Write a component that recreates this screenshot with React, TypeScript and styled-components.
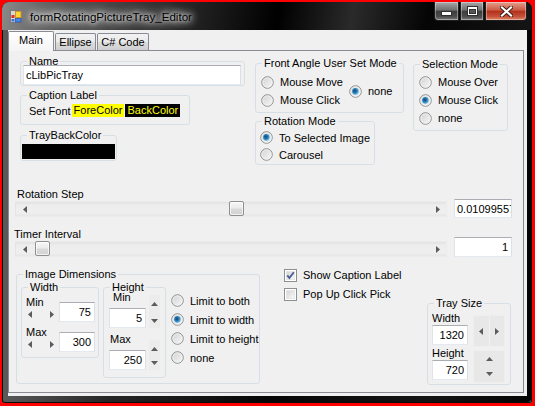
import React from 'react'
import styled, { createGlobalStyle } from 'styled-components'

const GlobalStyle = createGlobalStyle`
  html, body { margin: 0; padding: 0; background: #ff0000; overflow: hidden; }
  body { font-family: "Liberation Sans", Arial, sans-serif; font-size: 11px; color: #000; }
  * { box-sizing: border-box; }
`

// ---------- window chrome ----------
const Window = styled.div`
  width: 530px;
  height: 401px;
  margin: 2px 0 0 2px;
  display: flex;
  flex-direction: column;
  border-radius: 7px 7px 3px 3px;
  overflow: hidden;
  background: linear-gradient(90deg, #5a5a5a 0%, #262626 20%, #060606 50%, #141414 80%, #050505 100%);
  box-shadow: inset 0 0 0 1px #0a0a0a, inset -1px -1px 0 0 #4fb3c4;
`

const TitleBar = styled.div`
  height: 28px;
  flex: none;
  display: flex;
  align-items: center;
  padding-left: 8px;
  background: linear-gradient(100deg, #8a8a8a 0%, #5c5c5c 10%, #2c2c2c 32%, #000 52%, #2a2a2a 66%, #050505 80%, #151515 100%);
`

const AppIcon = () => (
  <svg width="12" height="13" viewBox="0 0 12 13">
    <rect x="0.5" y="0.5" width="11" height="12" fill="#d9d9d9" stroke="#7a7a7a" />
    <rect x="1.5" y="5" width="3" height="3" fill="#e03020" />
    <rect x="1.5" y="9" width="3" height="2.5" fill="#3a6fd0" />
    <rect x="5.5" y="1.5" width="5.5" height="6" fill="#ffd530" stroke="#c88a10" strokeWidth="0.8" />
    <rect x="5.5" y="8.5" width="5.5" height="3.5" fill="#4a86e8" stroke="#2a56b0" strokeWidth="0.8" />
  </svg>
)

const Caption = styled.span`
  margin-left: 8px;
  font-size: 11.6px;
  color: #000;
  white-space: nowrap;
  text-shadow: 0 0 4px #fff, 0 0 8px #fff, 0 0 12px rgba(255, 255, 255, 0.85), 0 0 18px rgba(255, 255, 255, 0.6);
`

const CaptionButtons = styled.div`
  display: flex;
  align-self: flex-start;
  margin-left: auto;
  margin-right: 5px;
`

const CapButton = styled.div<{ $kind: 'min' | 'max' | 'close' }>`
  width: ${p => (p.$kind === 'close' ? 42 : p.$kind === 'min' ? 25 : 24)}px;
  height: 19px;
  display: flex;
  align-items: center;
  justify-content: center;
  border: 1px solid #1e1e1e;
  border-top: none;
  margin-left: ${p => (p.$kind === 'min' ? 0 : 1)}px;
  border-radius: ${p => (p.$kind === 'min' ? '0 0 0 4px' : p.$kind === 'close' ? '0 0 4px 0' : '0')};
  box-shadow: inset 0 0 0 1px rgba(255, 255, 255, 0.35);
  background: ${p =>
    p.$kind === 'close'
      ? 'linear-gradient(#e3a08f, #cc5a44 45%, #b2321c 52%, #c4503a 80%, #e08a6a)'
      : 'linear-gradient(#a8a8a8, #6f6f6f 45%, #3e3e3e 52%, #4c4c4c 80%, #7a7a7a)'};
`

const MinGlyph = () => (
  <svg width="11" height="10" viewBox="0 0 11 10">
    <rect x="0.5" y="5.5" width="10" height="4" fill="#fff" stroke="#303030" />
  </svg>
)

const MaxGlyph = () => (
  <svg width="11" height="10" viewBox="0 0 11 10">
    <rect x="0.5" y="0.5" width="10" height="9" fill="#fff" stroke="#303030" />
    <rect x="2.5" y="3.5" width="6" height="4" fill="#555" stroke="#303030" />
  </svg>
)

const CloseGlyph = () => (
  <svg width="13" height="11" viewBox="0 0 13 11">
    <path d="M2 1.5 L11 9.5 M11 1.5 L2 9.5" stroke="#3a1a14" strokeWidth="4" strokeLinecap="square" />
    <path d="M2 1.5 L11 9.5 M11 1.5 L2 9.5" stroke="#fff" strokeWidth="2.2" strokeLinecap="square" />
  </svg>
)

const Client = styled.div`
  flex: 1;
  margin: 0 5px 7px 6px;
  padding: 1px 3px 3px 0;
  background: #f0f0f0;
  display: flex;
  flex-direction: column;
`

// ---------- tabs ----------
const TabStrip = styled.div`
  height: 19px;
  flex: none;
  display: flex;
  align-items: flex-end;
`

const Tab = styled.div<{ $active?: boolean; $w: number }>`
  width: ${p => p.$w}px;
  height: ${p => (p.$active ? 20 : 17)}px;
  margin-bottom: ${p => (p.$active ? -1 : 0)}px;
  margin-left: ${p => (p.$active ? 0 : 1)}px;
  position: relative;
  z-index: ${p => (p.$active ? 2 : 1)};
  border: 1px solid #898c95;
  border-bottom: none;
  border-radius: 2px 2px 0 0;
  padding-top: 2px;
  text-align: center;
  line-height: 13px;
  background: ${p => (p.$active ? 'linear-gradient(#ffffff, #f4f4f4)' : 'linear-gradient(#f2f2f2, #ebebeb 50%, #dddddd 51%, #cfcfcf)')};
`

const TabPage = styled.div`
  flex: 1;
  border: 1px solid #898c95;
  background: #f0f0f0;
  padding: 4px 0 0 5px;
  display: flex;
  flex-direction: column;
`

// ---------- group boxes ----------
const Group = styled.fieldset<{ $w: number; $h: number }>`
  margin: 0;
  padding: 0;
  min-width: 0;
  width: ${p => p.$w}px;
  height: ${p => p.$h}px;
  border: 1px solid #d5dfe5;
  border-radius: 3px;
  flex: none;
`

const Legend = styled.legend`
  margin-left: 6px;
  padding: 0 2px;
  line-height: 12px;
  font-size: 11px;
`

const Row1 = styled.div`
  height: 133px;
  flex: none;
  display: flex;
  align-items: flex-start;
  margin-left: 6px;
`

const Column = styled.div<{ $top?: number; $left?: number }>`
  display: flex;
  flex-direction: column;
  align-items: flex-start;
  margin-top: ${p => p.$top ?? 0}px;
  margin-left: ${p => p.$left ?? 0}px;
`

const Gap = styled.div<{ $h: number }>`
  height: ${p => p.$h}px;
  flex: none;
`

const TextBox = styled.div<{ $w: number; $h?: number; $right?: boolean }>`
  width: ${p => p.$w}px;
  height: ${p => p.$h ?? 20}px;
  flex: none;
  background: #fff;
  border: 1px solid;
  border-color: #abadb3 #dbdfe6 #e3e9ef #e2e3ea;
  display: flex;
  align-items: center;
  justify-content: ${p => (p.$right ? 'flex-end' : 'flex-start')};
  padding: 0 3px 0 2px;
  overflow: hidden;
  white-space: nowrap;
`

const NameBox = styled(TextBox)`
  margin: -2px 0 0 2px;
`

const FontRow = styled.div`
  display: flex;
  align-items: center;
  height: 13px;
  margin-top: 3px;
  padding-left: 8px;
  gap: 1px;
  white-space: nowrap;
`

const ColorChip = styled.span<{ $bg: string; $fg: string }>`
  background: ${p => p.$bg};
  color: ${p => p.$fg};
  line-height: 13px;
  padding: 0 2px;
`

const Swatch = styled.div`
  width: 93px;
  height: 15px;
  margin: 3px 0 0 1px;
  background: #000;
`

// ---------- radios & checks ----------
const Choice = styled.label<{ $h: number }>`
  display: flex;
  align-items: center;
  gap: 6px;
  height: ${p => p.$h}px;
  white-space: nowrap;
`

const RadioMark = ({ checked }: { checked?: boolean }) => (
  <svg width="13" height="13" viewBox="0 0 13 13">
    <defs>
      <linearGradient id="rbg" x1="0" y1="0" x2="1" y2="1">
        <stop offset="0" stopColor="#cfcfcf" />
        <stop offset="1" stopColor="#fafafa" />
      </linearGradient>
      <radialGradient id="rdot" cx="0.4" cy="0.4" r="0.65">
        <stop offset="0" stopColor="#14456f" />
        <stop offset="0.55" stopColor="#2c83bd" />
        <stop offset="1" stopColor="#9ad8f5" />
      </radialGradient>
    </defs>
    <circle cx="6.5" cy="6.5" r="5.8" fill="url(#rbg)" stroke="#8e8f8f" strokeWidth="1" />
    <circle cx="6.5" cy="6.5" r="4.6" fill="none" stroke="#f4f4f4" strokeWidth="0.8" />
    {checked && <circle cx="6.5" cy="6.5" r="3.4" fill="url(#rdot)" />}
  </svg>
)

const Radio = ({ label, checked, h }: { label: string; checked?: boolean; h: number }) => (
  <Choice $h={h}>
    <RadioMark checked={checked} />
    <span>{label}</span>
  </Choice>
)

const CheckMark = ({ checked }: { checked?: boolean }) => (
  <svg width="13" height="13" viewBox="0 0 13 13">
    <defs>
      <linearGradient id="cbg" x1="0" y1="0" x2="1" y2="1">
        <stop offset="0" stopColor="#d2d2d2" />
        <stop offset="1" stopColor="#fbfbfb" />
      </linearGradient>
    </defs>
    <rect x="0.5" y="0.5" width="12" height="12" fill="#fff" stroke="#8e8f8f" />
    <rect x="2.5" y="2.5" width="8" height="8" fill="url(#cbg)" stroke="#e6e6e6" />
    {checked && <path d="M3.3 6.4 L5.4 9 L9.8 3.2" fill="none" stroke="#4a5f98" strokeWidth="1.9" />}
  </svg>
)

const PaddedBox = styled.div<{ $top: number; $left: number }>`
  padding-top: ${p => p.$top}px;
  padding-left: ${p => p.$left}px;
`

const FrontRow = styled(PaddedBox)`
  display: flex;
  align-items: center;
`

const FrontPair = styled.div`
  width: 88px;
  display: flex;
  flex-direction: column;
`

// ---------- scroll bars ----------
const SliderBlock = styled.div<{ $top: number }>`
  display: grid;
  grid-template-columns: 432px 58px;
  column-gap: 7px;
  margin: ${p => p.$top}px 0 0 1px;
`

const SliderLabel = styled.div<{ $indent: number }>`
  grid-column: 1;
  line-height: 13px;
  height: 13px;
  margin-left: ${p => p.$indent}px;
`

const HScroll = styled.div`
  grid-column: 1;
  height: 16px;
  display: flex;
  background: linear-gradient(#e2e2e2, #ededed 25%, #efefef 75%, #e7e7e7);
  border: 1px solid #ececec;
  border-left-color: #e4e4e4;
`

const ScrollArrow = styled.div`
  width: 17px;
  flex: none;
  display: flex;
  align-items: center;
  justify-content: center;
`

const Lane = styled.div`
  flex: 1;
  position: relative;
`

const Thumb = styled.div`
  position: absolute;
  top: -1px;
  width: 15px;
  height: 15px;
  border: 1px solid #8f8f8f;
  border-radius: 2px;
  background: linear-gradient(#f7f7f7, #ebebeb 45%, #d9d9d9 55%, #d2d2d2);
  box-shadow: inset 0 0 0 1px rgba(255, 255, 255, 0.7);
`

const SliderValue = styled(TextBox)`
  grid-column: 2;
  grid-row: 1 / span 2;
  align-self: end;
`

type Dir = 'left' | 'right' | 'up' | 'down'
const Tri = ({ dir, color = '#5c5c5c' }: { dir: Dir; color?: string }) => {
  const pts = { left: '4,0 4,7 0,3.5', right: '0,0 0,7 4,3.5', up: '0,4 7,4 3.5,0', down: '0,0 7,0 3.5,4' }[dir]
  const horiz = dir === 'left' || dir === 'right'
  return (
    <svg width={horiz ? 4 : 7} height={horiz ? 7 : 4} viewBox={horiz ? '0 0 4 7' : '0 0 7 4'}>
      <polygon points={pts} fill={color} />
    </svg>
  )
}

const ScrollBar = ({ pos }: { pos: number }) => (
  <HScroll>
    <ScrollArrow><Tri dir="left" /></ScrollArrow>
    <Lane>
      <Thumb style={{ left: `${Math.round(pos * 381)}px` }} />
    </Lane>
    <ScrollArrow><Tri dir="right" /></ScrollArrow>
  </HScroll>
)

// ---------- bottom area ----------
const BottomRow = styled.div`
  display: flex;
  align-items: flex-start;
  margin-top: 11px;
`

const DimInner = styled.div`
  display: flex;
  align-items: flex-start;
  margin-top: 1px;
  padding-left: 4px;
`

const WidthInner = styled.div`
  padding: 3px 0 0 3px;
`

const HSpinBlock = styled.div`
  display: grid;
  grid-template-columns: 34px 36px;
  grid-template-rows: 12px 18px;
`

const SpinLabel = styled.div<{ $indent: number }>`
  grid-column: 1;
  grid-row: 1;
  line-height: 12px;
  margin-left: ${p => p.$indent}px;
`

const HArrows = styled.div`
  grid-column: 1;
  grid-row: 2;
  height: 10px;
  margin-top: 1px;
  display: flex;
  align-items: center;
  justify-content: space-between;
  padding: 0 5px 0 3px;
`

const SpinText = styled(TextBox)`
  grid-column: 2;
  grid-row: 1 / span 2;
  margin-top: 6px;
`

const HeightInner = styled.div`
  padding-left: 5px;
  margin-top: -2px;
`

const VSpinBlock = styled.div<{ $top: number }>`
  display: grid;
  grid-template-columns: 37px 11px;
  grid-template-rows: 12px 5px 20px;
  column-gap: 3px;
  margin-top: ${p => p.$top}px;
`

const VSpinLabel = styled.div<{ $indent: number }>`
  grid-column: 1;
  grid-row: 1;
  line-height: 12px;
  margin-left: ${p => p.$indent}px;
`

const VSpinText = styled(TextBox)`
  grid-column: 1;
  grid-row: 3;
`

const VArrows = styled.div<{ $h: number }>`
  grid-column: 2;
  grid-row: 1 / span 3;
  align-self: end;
  height: ${p => p.$h}px;
  display: flex;
  flex-direction: column;
  align-items: center;
  justify-content: space-between;
  padding: 7px 0 5px;
  background: #ececec;
`

const LimitList = styled.div`
  display: flex;
  flex-direction: column;
  margin: 10px 0 0 5px;
`

const CheckList = styled.div`
  width: 143px;
  margin-left: 24px;
  display: flex;
  flex-direction: column;
  gap: 5px;
`

const TrayGroup = styled(Group)`
  margin-top: 29px;
`

const TrayInner = styled.div`
  padding: 3px 0 0 4px;
`

const TrayBlock = styled.div<{ $top: number }>`
  display: grid;
  grid-template-columns: 36px 32px;
  grid-template-rows: 12px 21px;
  column-gap: 5px;
  margin-top: ${p => p.$top}px;
`

const TrayLabel = styled.div`
  grid-column: 1;
  grid-row: 1;
  line-height: 12px;
`

const TrayText = styled(TextBox)`
  grid-column: 1;
  grid-row: 2;
  margin-top: 1px;
`

const SpinPanel = styled.div<{ $vertical?: boolean; $drop: number }>`
  grid-column: 2;
  grid-row: 1 / span 2;
  align-self: end;
  height: 32px;
  margin-bottom: -${p => p.$drop}px;
  display: flex;
  flex-direction: ${p => (p.$vertical ? 'column' : 'row')};
  background: #e8e8e8;
  border: 1px solid #eeeeee;
`

const SpinHalf = styled.div<{ $vertical?: boolean }>`
  flex: 1;
  display: flex;
  align-items: center;
  justify-content: center;
  ${p => (p.$vertical ? '' : 'border-right: 1px solid #f1f1f1;')}
  &:last-child { border-right: none; }
`

const frontModes = [
  { label: 'Mouse Move', checked: false },
  { label: 'Mouse Click', checked: false },
]
const selectionModes = [
  { label: 'Mouse Over', checked: false },
  { label: 'Mouse Click', checked: true },
  { label: 'none', checked: false },
]
const rotationModes = [
  { label: 'To Selected Image', checked: true },
  { label: 'Carousel', checked: false },
]
const limits = [
  { label: 'Limit to both', checked: false },
  { label: 'Limit to width', checked: true },
  { label: 'Limit to height', checked: false },
  { label: 'none', checked: false },
]

export default function App() {
  return (
    <>
      <GlobalStyle />
      <Window>
        <TitleBar>
          <AppIcon />
          <Caption>formRotatingPictureTray_Editor</Caption>
          <CaptionButtons>
            <CapButton $kind="min"><MinGlyph /></CapButton>
            <CapButton $kind="max"><MaxGlyph /></CapButton>
            <CapButton $kind="close"><CloseGlyph /></CapButton>
          </CaptionButtons>
        </TitleBar>
        <Client>
          <TabStrip>
            <Tab $active $w={46}>Main</Tab>
            <Tab $w={41}>Ellipse</Tab>
            <Tab $w={52}>C# Code</Tab>
          </TabStrip>
          <TabPage>
            <Row1>
              <Column>
                <Group $w={225} $h={31}>
                  <Legend>Name</Legend>
                  <NameBox $w={218}>cLibPicTray</NameBox>
                </Group>
                <Gap $h={3} />
                <Group $w={170} $h={36}>
                  <Legend>Caption Label</Legend>
                  <FontRow>
                    <span>Set Font</span>
                    <ColorChip $bg="#ffff00" $fg="#000">ForeColor</ColorChip>
                    <ColorChip $bg="#000" $fg="#ffff00">BackColor</ColorChip>
                  </FontRow>
                </Group>
                <Gap $h={4} />
                <Group $w={97} $h={32}>
                  <Legend>TrayBackColor</Legend>
                  <Swatch />
                </Group>
              </Column>
              <Column $top={2} $left={10}>
                <Group $w={149} $h={56}>
                  <Legend>Front Angle User Set Mode</Legend>
                  <FrontRow $top={4} $left={5}>
                    <FrontPair>
                      {frontModes.map(m => <Radio key={m.label} h={18} {...m} />)}
                    </FrontPair>
                    <Radio label="none" checked h={18} />
                  </FrontRow>
                </Group>
                <Gap $h={2} />
                <Group $w={120} $h={50}>
                  <Legend>Rotation Mode</Legend>
                  <PaddedBox $top={2} $left={4}>
                    {rotationModes.map(m => <Radio key={m.label} h={17} {...m} />)}
                  </PaddedBox>
                </Group>
              </Column>
              <Column $top={3} $left={9}>
                <Group $w={95} $h={73}>
                  <Legend>Selection Mode</Legend>
                  <PaddedBox $top={3} $left={5}>
                    {selectionModes.map(m => <Radio key={m.label} h={18} {...m} />)}
                  </PaddedBox>
                </Group>
              </Column>
            </Row1>

            <SliderBlock $top={0}>
              <SliderLabel $indent={2}>Rotation Step</SliderLabel>
              <ScrollBar pos={0.514} />
              <SliderValue $w={58} $h={19} style={{ marginBottom: -1 }}>0.01099557</SliderValue>
            </SliderBlock>
            <SliderBlock $top={11}>
              <SliderLabel $indent={-1}>Timer Interval</SliderLabel>
              <ScrollBar pos={0.005} />
              <SliderValue $w={58} $right>1</SliderValue>
            </SliderBlock>

            <BottomRow>
              <Group $w={244} $h={116} style={{ marginLeft: 2 }}>
                <Legend>Image Dimensions</Legend>
                <DimInner>
                  <Group $w={78} $h={77}>
                    <Legend>Width</Legend>
                    <WidthInner>
                      <HSpinBlock>
                        <SpinLabel $indent={1}>Min</SpinLabel>
                        <HArrows><Tri dir="left" /><Tri dir="right" /></HArrows>
                        <SpinText $w={36} $right>75</SpinText>
                      </HSpinBlock>
                      <HSpinBlock>
                        <SpinLabel $indent={1}>Max</SpinLabel>
                        <HArrows><Tri dir="left" /><Tri dir="right" /></HArrows>
                        <SpinText $w={36} $right>300</SpinText>
                      </HSpinBlock>
                    </WidthInner>
                  </Group>
                  <Group $w={63} $h={97} style={{ marginLeft: 4 }}>
                    <Legend>Height</Legend>
                    <HeightInner>
                      <VSpinBlock $top={0}>
                        <VSpinLabel $indent={4}>Min</VSpinLabel>
                        <VSpinText $w={37} $right>5</VSpinText>
                        <VArrows $h={33}><Tri dir="up" /><Tri dir="down" /></VArrows>
                      </VSpinBlock>
                      <VSpinBlock $top={5}>
                        <VSpinLabel $indent={1}>Max</VSpinLabel>
                        <VSpinText $w={37} $right>250</VSpinText>
                        <VArrows $h={30}><Tri dir="up" /><Tri dir="down" /></VArrows>
                      </VSpinBlock>
                    </HeightInner>
                  </Group>
                  <LimitList>
                    {limits.map(m => <Radio key={m.label} h={19} {...m} />)}
                  </LimitList>
                </DimInner>
              </Group>

              <CheckList>
                <Choice $h={14}><CheckMark checked /><span>Show Caption Label</span></Choice>
                <Choice $h={14}><CheckMark /><span>Pop Up Click Pick</span></Choice>
              </CheckList>

              <TrayGroup $w={84} $h={88}>
                <Legend>Tray Size</Legend>
                <TrayInner>
                  <TrayBlock $top={0}>
                    <TrayLabel>Width</TrayLabel>
                    <TrayText $w={36} $right>1320</TrayText>
                    <SpinPanel $drop={2}>
                      <SpinHalf><Tri dir="left" /></SpinHalf>
                      <SpinHalf><Tri dir="right" /></SpinHalf>
                    </SpinPanel>
                  </TrayBlock>
                  <TrayBlock $top={2}>
                    <TrayLabel>Height</TrayLabel>
                    <TrayText $w={36} $right>720</TrayText>
                    <SpinPanel $vertical $drop={3} style={{ height: 33 }}>
                      <SpinHalf $vertical><Tri dir="up" /></SpinHalf>
                      <SpinHalf $vertical><Tri dir="down" /></SpinHalf>
                    </SpinPanel>
                  </TrayBlock>
                </TrayInner>
              </TrayGroup>
            </BottomRow>
          </TabPage>
        </Client>
      </Window>
    </>
  )
}
